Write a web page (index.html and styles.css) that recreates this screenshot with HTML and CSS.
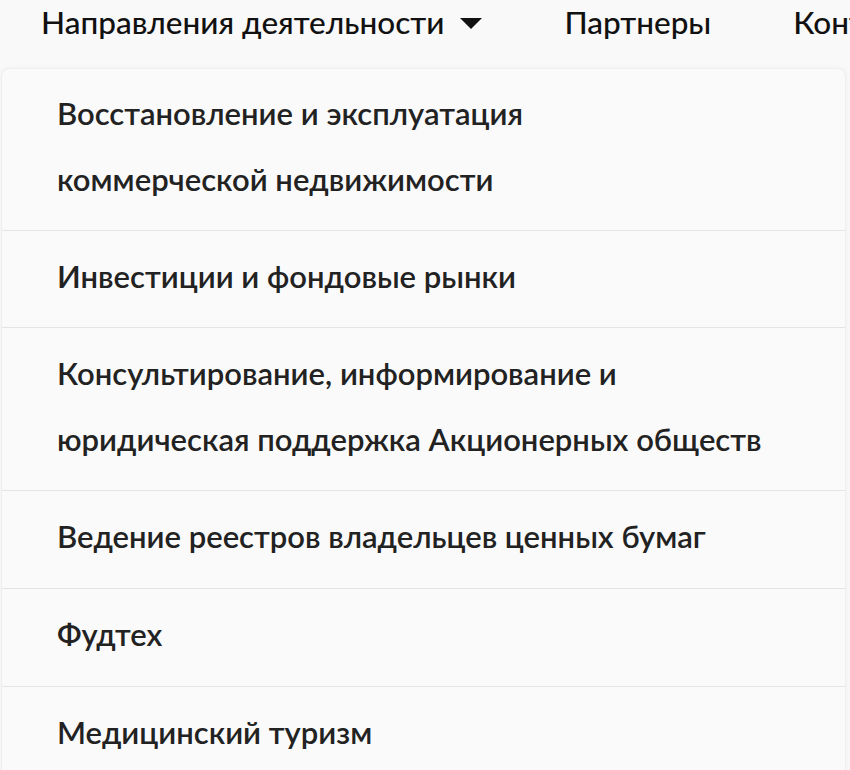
FILE: index.html
```html
<!DOCTYPE html>
<html lang="ru">
<head>
    <meta charset="UTF-8">
    <meta name="viewport" content="width=device-width, initial-scale=1.0">
    <title>Направления деятельности</title>
    <link rel="stylesheet" href="styles.css">
</head>
<body>

<nav class="top-nav">
    <a class="nav-link has-dropdown" href="#">
        Направления деятельности
        <span class="caret"></span>
    </a>
    <a class="nav-link" href="#">Партнеры</a>
    <a class="nav-link" href="#">Контакты</a>
</nav>

<!-- Выпадающее меню -->
<ul class="dropdown">
    <li><a href="#">Восстановление и эксплуатация<br>коммерческой недвижимости</a></li>
    <li><a href="#">Инвестиции и фондовые рынки</a></li>
    <li><a href="#">Консультирование, информирование и<br>юридическая поддержка Акционерных обществ</a></li>
    <li><a href="#">Ведение реестров владельцев ценных бумаг</a></li>
    <li><a href="#">Фудтех</a></li>
    <li><a href="#">Медицинский туризм</a></li>
</ul>

</body>
</html>
```
FILE: styles.css
```css
/* Общие стили */
body {
    font-family: 'Lato', 'Noto Sans', sans-serif;
    background-color: #f9f9f9;
    color: #1c1c1c;
    margin: 0;
    overflow: hidden;
}

a {
    color: inherit;
    text-decoration: none;
}

/* Верхнее меню */
.top-nav {
    display: flex;
    gap: 82px;
    padding: 2px 0 0 41px;
    height: 40px;
    white-space: nowrap;
    overflow: hidden; /* последний пункт уходит за край, как в макете */
}

.nav-link {
    display: flex;
    align-items: center;
    font-size: 31.5px;
    font-weight: 500;
    line-height: 40px;
    color: #111;
}

.caret {
    width: 0;
    height: 0;
    margin-left: 16px;
    margin-top: 2px;
    border-left: 11px solid transparent;
    border-right: 11px solid transparent;
    border-top: 11px solid #111;
}

/* Выпадающий список */
.dropdown {
    list-style: none;
    margin: 26px 4px 0 1px;
    padding: 0;
    background-color: #fafafa;
    border: 1px solid #efefef;
    border-radius: 8px;
    box-shadow: 0 0 6px rgba(0, 0, 0, 0.04);
}

.dropdown li {
    padding: 12px 0 18px 55px;
    border-bottom: 1px solid #e4e4e4;
}

.dropdown li:first-child {
    padding-top: 11px;
}

.dropdown li:nth-child(n+4) {
    padding-bottom: 19px; /* нижние пункты чуть выше */
}

.dropdown li:last-child {
    border-bottom: none;
}

.dropdown a {
    display: block;
    font-size: 31px;
    font-weight: 600;
    line-height: 66px;
    color: #222;
}
```
